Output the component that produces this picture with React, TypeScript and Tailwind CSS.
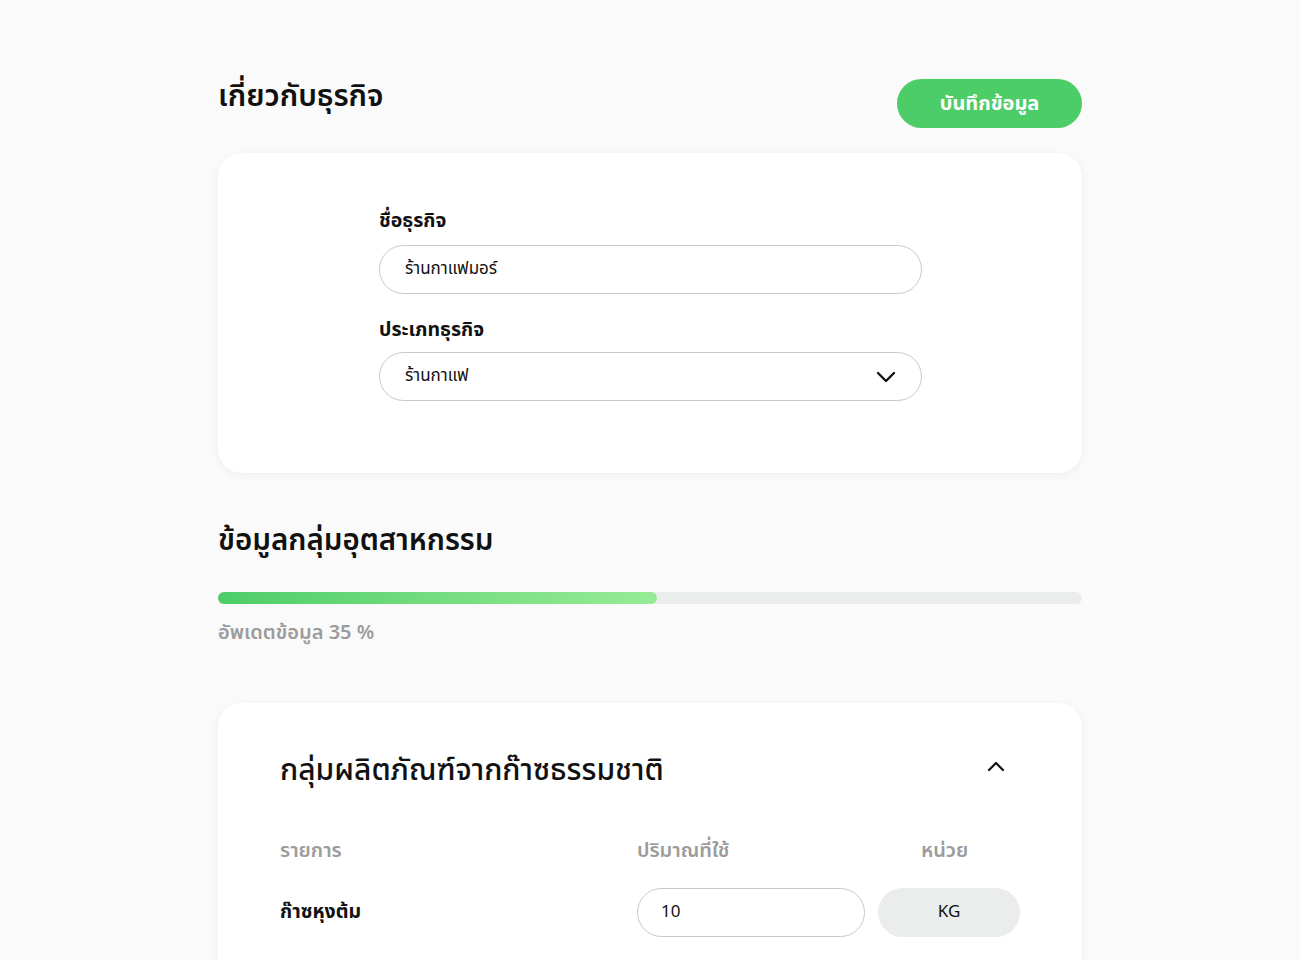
import React from "react";

const font = { fontFamily: '"Noto Sans Thai", "Noto Sans", "Liberation Sans", sans-serif' };

function ChevronDown() {
  return (
    <svg width="20" height="12" viewBox="0 0 20 12" fill="none">
      <path d="M2 2l8 8 8-8" stroke="#111" strokeWidth="2.4" strokeLinecap="round" strokeLinejoin="round" />
    </svg>
  );
}
function ChevronUp() {
  return (
    <svg width="18" height="11" viewBox="0 0 18 11" fill="none">
      <path d="M2 9l7-7 7 7" stroke="#111" strokeWidth="2.2" strokeLinecap="round" strokeLinejoin="round" />
    </svg>
  );
}

export default function App() {
  return (
    <div className="min-h-[960px] w-full bg-[#fafafa] text-[#111]" style={font}>
      <div className="mx-auto w-[864px] pt-[79px]">
        <div className="flex items-start justify-between">
          <h1 className="text-[30px] font-semibold leading-[36px]">เกี่ยวกับธุรกิจ</h1>
          <button className="flex h-[49px] w-[185px] items-center justify-center rounded-full bg-[#4ccd68] text-[20px] font-bold text-white">
            บันทึกข้อมูล
          </button>
        </div>

        <div className="mt-[25px] h-[320px] rounded-[24px] bg-white shadow-[0_2px_10px_rgba(0,0,0,0.05)]">
          <div className="flex flex-col pl-[161px] pt-[52px]">
            <label className="text-[19.5px] font-bold leading-[32px]">ชื่อธุรกิจ</label>
            <div className="mt-[8px] flex h-[49px] w-[543px] items-center rounded-full border border-[#c8c8c8] px-[25px] pt-[1px] text-[17px]">
              ร้านกาแฟมอร์
            </div>
            <label className="mt-[20px] text-[19.5px] font-bold leading-[32px]">ประเภทธุรกิจ</label>
            <div className="mt-[6px] flex h-[49px] w-[543px] items-center justify-between rounded-full border border-[#c8c8c8] pl-[25px] pr-[25px] text-[17px]">
              <span className="pt-[1px]">ร้านกาแฟ</span>
              <ChevronDown />
            </div>
          </div>
        </div>

        <h2 className="mt-[48px] text-[29.5px] font-semibold leading-[40px]">ข้อมูลกลุ่มอุตสาหกรรม</h2>
        <div className="mt-[31px] h-[12px] w-full rounded-full bg-[#ebecec]">
          <div className="h-[12px] w-[439px] rounded-full bg-gradient-to-r from-[#4ccd68] to-[#96ec96]" />
        </div>
        <p className="mt-[15px] text-[20px] font-semibold leading-[28px] text-[#9c9c9c]">อัพเดตข้อมูล 35 %</p>

        <div className="mt-[56px] h-[300px] rounded-[24px] bg-white px-[62px] pt-[48px] shadow-[0_2px_10px_rgba(0,0,0,0.05)]">
          <div className="flex items-center justify-between">
            <h3 className="text-[30px] font-medium leading-[40px]">กลุ่มผลิตภัณฑ์จากก๊าซธรรมชาติ</h3>
            <div className="mr-[15px] mb-[10px]"><ChevronUp /></div>
          </div>
          <div className="mt-[46px] flex text-[20px] font-semibold leading-[28px] text-[#9c9c9c]">
            <span className="w-[357px]">รายการ</span>
            <span className="w-[284px]">ปริมาณที่ใช้</span>
            <span>หน่วย</span>
          </div>
          <div className="mt-[23px] flex items-center">
            <span className="w-[357px] text-[19.5px] font-bold">ก๊าซหุงต้ม</span>
            <div className="flex h-[49px] w-[228px] items-center rounded-full border border-[#c8c8c8] px-[23px] text-[17px]">10</div>
            <div className="ml-[13px] flex h-[49px] w-[142px] items-center justify-center rounded-full bg-[#ebecec] text-[17px]">KG</div>
          </div>
        </div>
      </div>
    </div>
  );
}
